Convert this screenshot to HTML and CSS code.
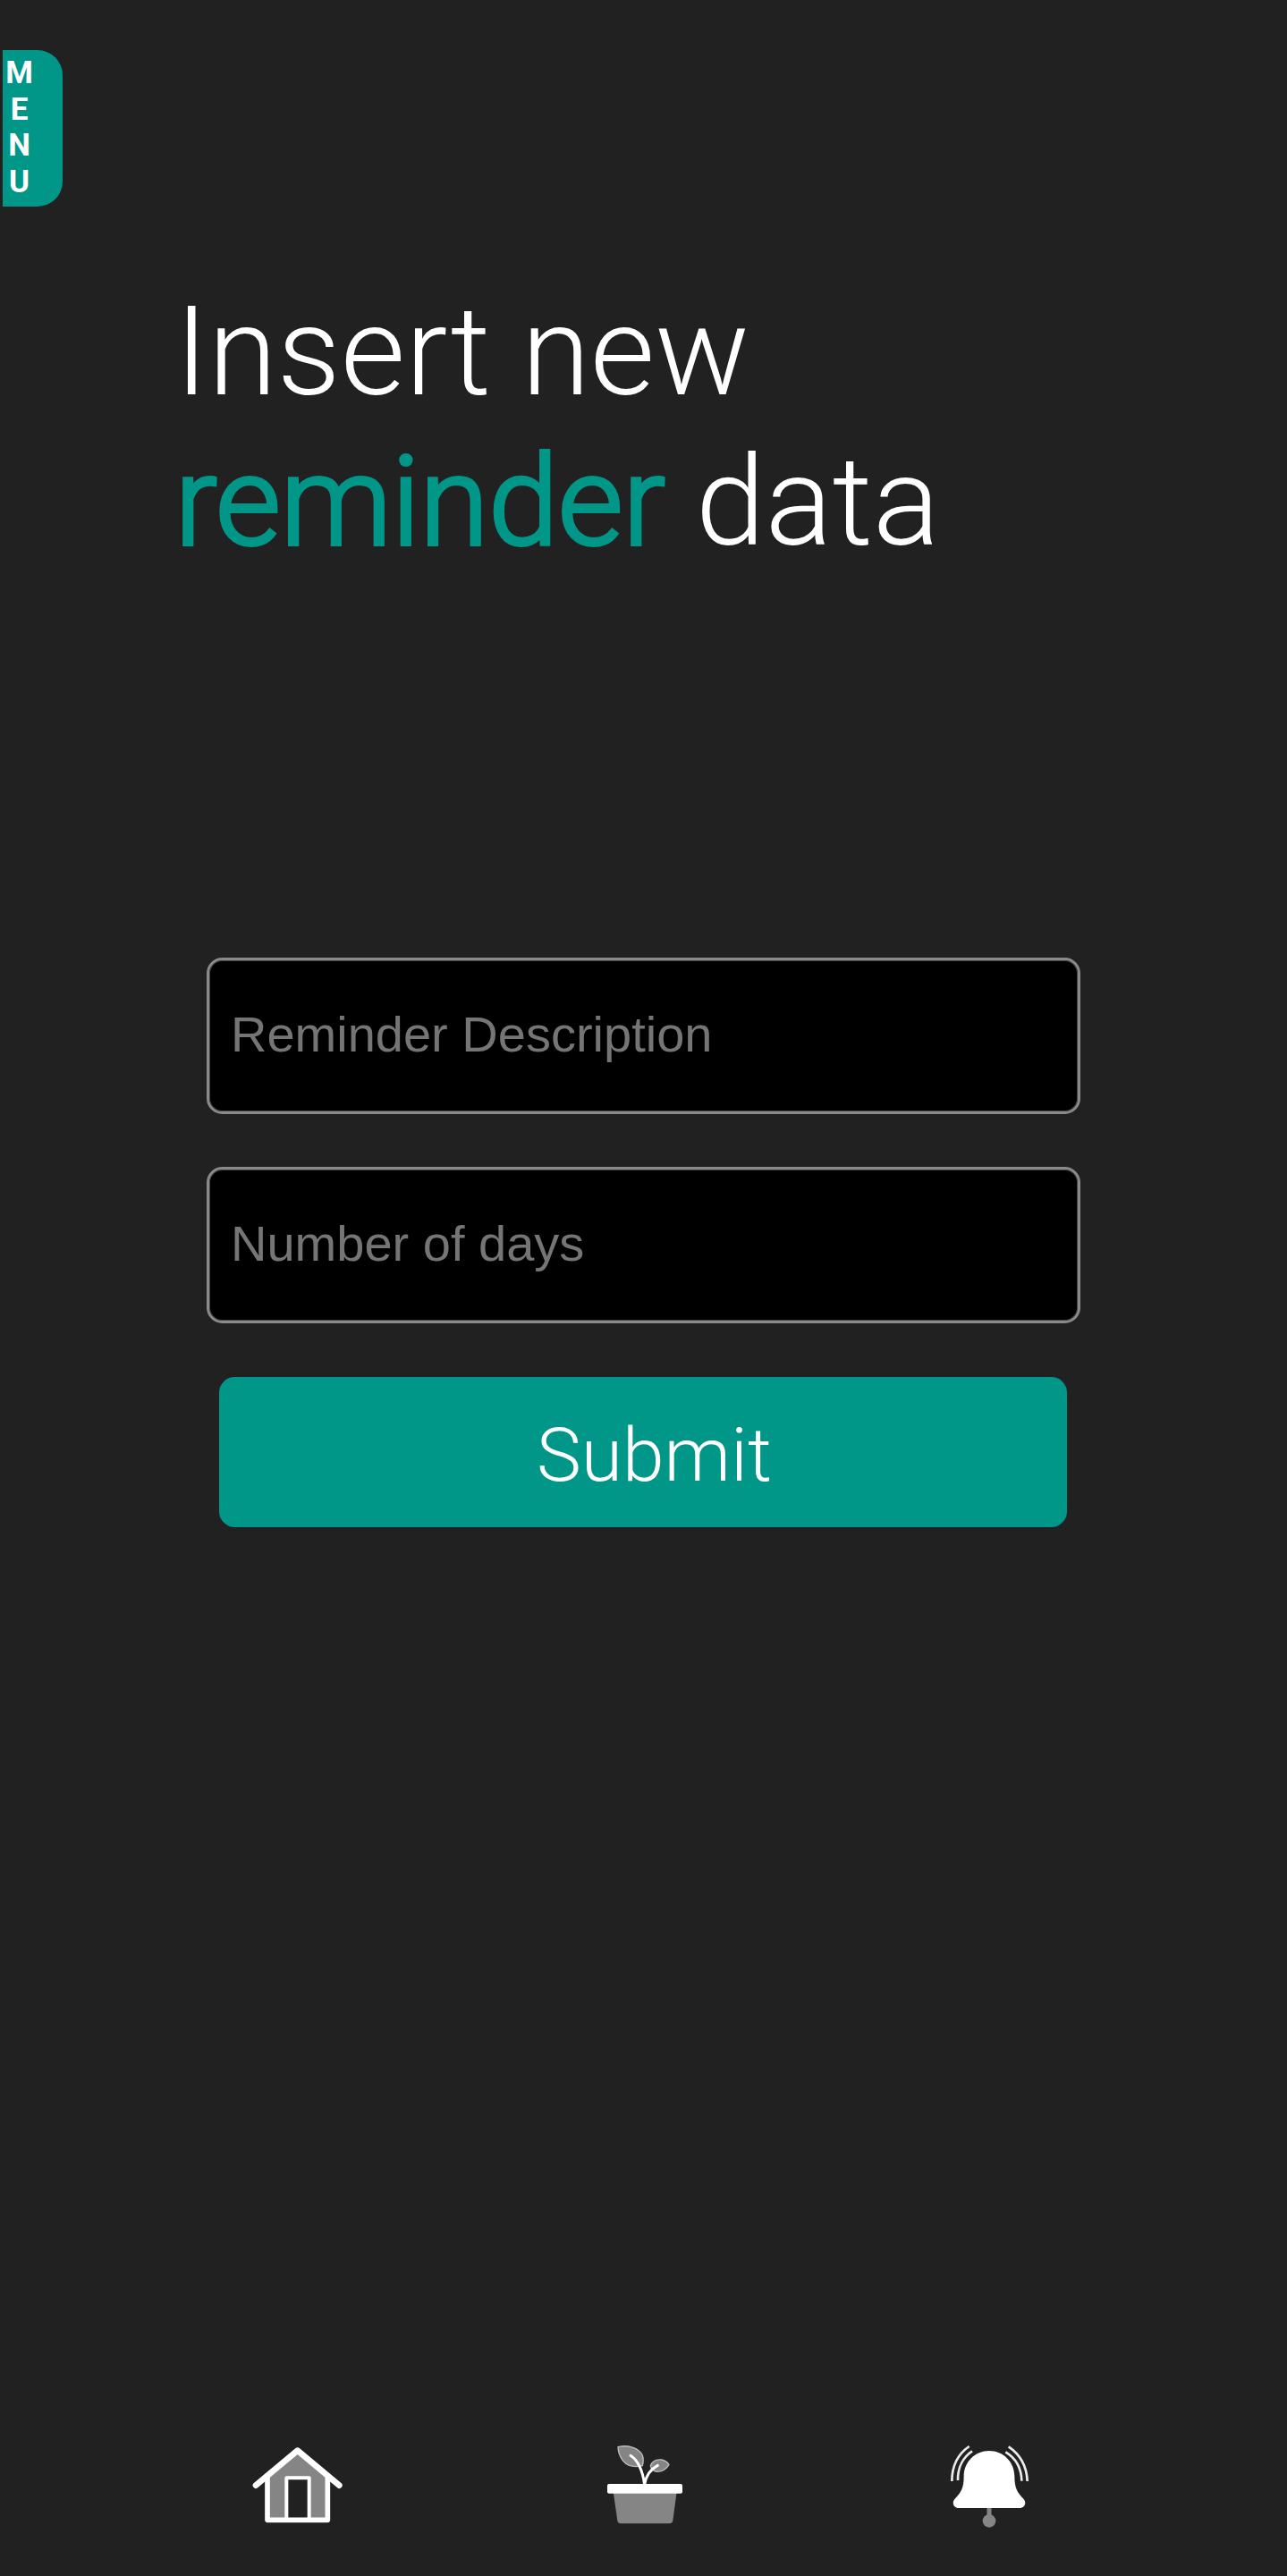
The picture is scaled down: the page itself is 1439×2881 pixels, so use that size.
FILE: index.html
```html
<!DOCTYPE html>
<html lang="en">
<head>
<meta charset="utf-8">
<title>Insert reminder</title>
<link rel="stylesheet" href="styles.css">
</head>
<body>
<div class="page">
  <button class="menu" type="button"><span>M</span><span>E</span><span>N</span><span>U</span></button>
  <h1 class="title">Insert new<br><span class="accent">reminder</span> data</h1>
  <form class="form">
    <input class="field" type="text" placeholder="Reminder Description">
    <input class="field" type="text" placeholder="Number of days">
    <button class="submit" type="button">Submit</button>
  </form>
  <nav class="nav">
    <a class="nav-link" aria-label="Home">
      <svg width="130" height="120" viewBox="0 0 390 360">
        <path d="M87 295V145L188 62L289 145V295Z" fill="#858585"/>
        <path d="M152 295V154H226V295Z" fill="#212121"/>
        <path d="M87 140V295H289V140" fill="none" stroke="#fff" stroke-width="17" stroke-linejoin="round"/>
        <path d="M151 290V154H227V290" fill="none" stroke="#fff" stroke-width="12" stroke-linejoin="round"/>
        <path d="M48 179L188 62L328 179" fill="none" stroke="#fff" stroke-width="20" stroke-linecap="round" stroke-linejoin="round"/>
      </svg>
    </a>
    <a class="nav-link" aria-label="Plants">
      <svg width="120" height="120" viewBox="0 0 360 360">
        <path d="M62 200H275L262 297Q260 307 250 307H88Q78 307 76 297Z" fill="#858585"/>
        <path d="M78 50C110 42 147 52 160 78Q165 94 160 113C135 120 106 115 91 91Q79 73 78 50Z" fill="#858585" stroke="#bdbdbd" stroke-width="4"/>
        <path d="M187 114C192 98 207 91 224 93Q240 96 249 109C240 125 223 133 208 133Q192 131 187 114Z" fill="#858585" stroke="#bdbdbd" stroke-width="4"/>
        <path d="M120 79C145 95 160 125 167 177C171 150 184 126 211 112" fill="none" stroke="#fff" stroke-width="9" stroke-linecap="round" stroke-linejoin="round"/>
        <rect x="42" y="174" width="252" height="32" rx="6" fill="#fff"/>
      </svg>
    </a>
    <a class="nav-link" aria-label="Reminders">
      <svg width="110" height="120" viewBox="0 0 330 360">
        <path d="M168 250V285" stroke="#858585" stroke-width="15"/>
        <circle cx="168" cy="298" r="22" fill="#858585"/>
        <path d="M168 63C215 63 253 100 253 148C253 188 262 203 283 224C295 237 287 255 270 255H66C49 255 41 237 53 224C74 203 83 188 83 148C83 100 121 63 168 63Z" fill="#fff"/>
        <g fill="none" stroke="#ececec" stroke-width="8">
          <path d="M101 48C66 72 43 112 43 165"/>
          <path d="M111 64C81 84 62 119 63 162"/>
          <path d="M233 49C270 74 294 112 296 165"/>
          <path d="M223 67C255 86 276 119 277 164"/>
        </g>
      </svg>
    </a>
  </nav>
</div>
</body>
</html>
```
FILE: styles.css
```css
* {
  box-sizing: border-box;
}

body {
  margin: 0;
  background: #212121;
  font-family: Roboto, sans-serif;
  font-weight: 300;
  color: #fff;
}

.page {
  display: flex;
  flex-direction: column;
  min-height: 2881px;
  padding-top: 56px;
}

.menu {
  display: flex;
  flex-direction: column;
  align-items: center;
  width: 67px;
  height: 175px;
  margin: 0 0 0 3px;
  padding: 6px 30px 0 0;
  border: 0;
  border-radius: 0 28px 28px 0;
  background: #009688;
  color: #fff;
  font: 700 35px/40.7px Roboto, sans-serif;
}

.title {
  margin: 78px 0 0 195.5px;
  font-size: 140px;
  font-weight: 300;
  line-height: 168px;
}

.accent {
  color: #009688;
  -webkit-text-stroke: 4px #009688;
}

.form {
  display: flex;
  flex-direction: column;
  align-items: flex-start;
  margin-top: 426px;
  padding-left: 231px;
}

.field {
  width: 977px;
  height: 175px;
  margin: 0 0 59px;
  padding: 0 24px 4px;
  border: 3px solid #8a8a8a;
  border-radius: 17.5px;
  background: #000;
  box-shadow: inset 0 0 0 1px #454545;
  color: #fff;
  font: 400 56px "Liberation Sans", sans-serif;
}

.field::placeholder {
  color: #757575;
}

.submit {
  width: 948px;
  height: 168px;
  margin: 1px 0 0 14px;
  padding: 6px 0 0 25px;
  border: 0;
  border-radius: 17.5px;
  background: #009688;
  color: #fff;
  font: 300 84px Roboto, sans-serif;
}

.nav {
  display: flex;
  justify-content: space-between;
  margin-top: auto;
  padding: 0 279px 41px 270px;
}

.nav-link {
  display: flex;
}
```
